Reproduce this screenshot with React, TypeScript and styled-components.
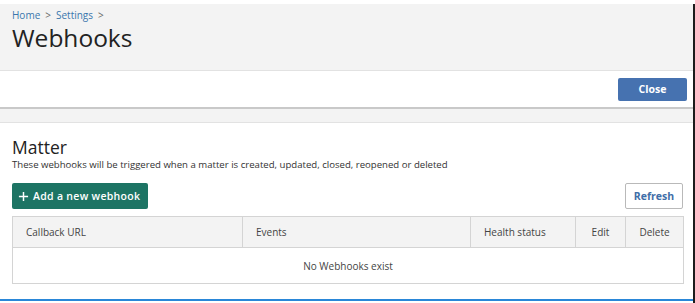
import styled, { createGlobalStyle } from 'styled-components'

const GlobalStyle = createGlobalStyle`
  html, body {
    margin: 0;
    padding: 0;
    background: #ffffff;
  }
  body {
    font-family: 'Open Sans', 'Noto Sans', 'Liberation Sans', sans-serif;
    color: #333333;
  }
  * {
    box-sizing: border-box;
  }
`

const Page = styled.div`
  margin-top: 4px;
  border-right: 2px solid #1c1c1c;
  min-height: 299px;
  display: flex;
  flex-direction: column;
`

const Header = styled.header`
  background: #f3f3f3;
  height: 67px;
  padding: 4px 12px 0;
  border-bottom: 1px solid #e2e2e2;
`

const Breadcrumb = styled.nav`
  font-size: 10px;
  line-height: 14px;
  color: #3a76ad;
  display: flex;
  gap: 5px;

  span.sep {
    color: #666666;
  }
`

const Title = styled.h1`
  margin: 2px 0 0;
  font-size: 24.5px;
  font-weight: 400;
  line-height: 28px;
  color: #222222;
`

const Toolbar = styled.div`
  height: 38px;
  display: flex;
  align-items: center;
  justify-content: flex-end;
  padding: 0 6px 0 12px;
  border-bottom: 2px solid #c9c9c9;
`

const PrimaryButton = styled.button`
  width: 69px;
  height: 23px;
  border: none;
  border-radius: 2px;
  background: #4672b0;
  color: #ffffff;
  font-family: inherit;
  font-size: 10.5px;
  font-weight: 700;
  cursor: pointer;
`

const Strip = styled.div`
  height: 14px;
  background: #f3f3f3;
  border-bottom: 1px solid #e2e2e2;
`

const Section = styled.section`
  padding: 14px 10px 0 12px;
`

const SectionTitle = styled.h2`
  margin: 0;
  font-size: 17.5px;
  font-weight: 400;
  line-height: 21px;
  color: #222222;
`

const Description = styled.p`
  margin: 0;
  font-size: 9.6px;
  line-height: 13px;
  color: #333333;
`

const Actions = styled.div`
  margin-top: 12px;
  display: flex;
  justify-content: space-between;
  align-items: center;
`

const AddButton = styled.button`
  height: 26px;
  width: 136px;
  display: flex;
  align-items: center;
  gap: 4px;
  padding: 0 6px;
  border: none;
  border-radius: 2px;
  background: #1d7464;
  color: #ffffff;
  font-family: inherit;
  font-size: 10.5px;
  font-weight: 600;
  letter-spacing: 0.3px;
  white-space: nowrap;
  cursor: pointer;
`

const OutlineButton = styled.button`
  height: 26px;
  width: 58px;
  border: 1px solid #b9b9b9;
  border-radius: 2px;
  background: #ffffff;
  color: #3f6ea8;
  font-family: inherit;
  font-size: 10.5px;
  font-weight: 700;
  cursor: pointer;
`

const Table = styled.table`
  margin-top: 7px;
  width: 100%;
  border-collapse: collapse;
  table-layout: fixed;
  font-size: 10px;
  color: #444444;
  border: 1px solid #d4d4d4;
`

const HeadCell = styled.th<{ $align?: string }>`
  height: 31px;
  background: #f3f3f3;
  font-weight: 400;
  text-align: ${(p) => p.$align || 'left'};
  padding: 0 0 0 13px;
  border: 1px solid #d4d4d4;
  ${(p) => (p.$align === 'center' ? 'padding: 0;' : '')}
`

const EmptyCell = styled.td`
  height: 36px;
  text-align: center;
  background: #ffffff;
`

const Footer = styled.div`
  margin-top: 15px;
  height: 2px;
  background: #2a87d8;
`

const PlusIcon = () => (
  <svg width="11" height="11" viewBox="0 0 12 12">
    <path d="M6 1v10M1 6h10" stroke="#ffffff" strokeWidth="1.6" />
  </svg>
)

const columns = [
  { label: 'Callback URL', width: 230 },
  { label: 'Events', width: 228 },
  { label: 'Health status', width: 105 },
  { label: 'Edit', width: 50, align: 'center' },
  { label: 'Delete', width: 58, align: 'center' },
]

const App = () => {
  return (
    <>
      <GlobalStyle />
      <Page>
        <Header>
          <Breadcrumb>
            <span>Home</span>
            <span className="sep">&gt;</span>
            <span>Settings</span>
            <span className="sep">&gt;</span>
          </Breadcrumb>
          <Title>Webhooks</Title>
        </Header>
        <Toolbar>
          <PrimaryButton>Close</PrimaryButton>
        </Toolbar>
        <Strip />
        <Section>
          <SectionTitle>Matter</SectionTitle>
          <Description>
            These webhooks will be triggered when a matter is created, updated,
            closed, reopened or deleted
          </Description>
          <Actions>
            <AddButton>
              <PlusIcon />
              Add a new webhook
            </AddButton>
            <OutlineButton>Refresh</OutlineButton>
          </Actions>
          <Table>
            <colgroup>
              {columns.map((c) => (
                <col key={c.label} style={{ width: c.width }} />
              ))}
            </colgroup>
            <thead>
              <tr>
                {columns.map((c) => (
                  <HeadCell key={c.label} $align={c.align}>
                    {c.label}
                  </HeadCell>
                ))}
              </tr>
            </thead>
            <tbody>
              <tr>
                <EmptyCell colSpan={5}>No Webhooks exist</EmptyCell>
              </tr>
            </tbody>
          </Table>
        </Section>
        <Footer />
      </Page>
    </>
  )
}

export default App
